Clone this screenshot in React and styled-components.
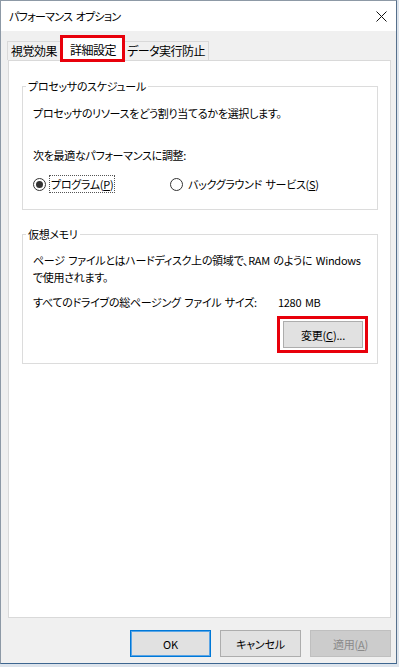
import React from 'react';
import styled, { createGlobalStyle } from 'styled-components';

// Base page: no margin, Japanese UI font with proportional kana
const GlobalStyle = createGlobalStyle`
  html, body {
    margin: 0;
    padding: 0;
    background: #dde4ec;
  }
  body {
    font-family: "Noto Sans CJK JP", "Noto Sans", sans-serif;
    font-size: 11px;
    color: #000000;
  }
`;

const Window = styled.div`
  width: 397px;
  height: 664px;
  box-sizing: border-box;
  border: 1px solid #8d99a6;
  border-right-color: #56708c;
  border-bottom-color: #3d6690;
  background: #f0f0f0;
  display: flex;
  flex-direction: column;
  font-size: 11px;
  font-feature-settings: "palt";
  letter-spacing: -0.3px;
  word-spacing: 1.5px;
  line-height: 16px;
`;

const TitleBar = styled.div`
  height: 30px;
  flex: none;
  background: #ffffff;
  display: flex;
  align-items: center;
  justify-content: space-between;
  padding: 0 9px 0 8px;
`;

const Title = styled.span`
  font-size: 11px;
  letter-spacing: -0.7px;
`;

const Body = styled.div`
  flex: 1;
  display: flex;
  flex-direction: column;
  padding: 4px 5px 0 6px;
  min-height: 0;
`;

const TabStrip = styled.div`
  display: flex;
  align-items: flex-end;
  height: 25px;
  flex: none;
`;

const Tab = styled.div`
  position: relative;
  box-sizing: border-box;
  display: flex;
  align-items: center;
  white-space: nowrap;
  font-size: 12px;
  letter-spacing: -0.5px;
  height: ${(p) => (p.$active ? '27px' : '19px')};
  padding: ${(p) => (p.$active ? '2px 6px 0 7px' : '0 3px')};
  margin: ${(p) => (p.$active ? '0 -2px -2px -1px' : '0')};
  background: ${(p) => (p.$active ? '#ffffff' : '#f0f0f0')};
  border: ${(p) => (p.$active ? '3px solid #e8000b' : '1px solid #d9d9d9')};
  border-bottom-width: ${(p) => (p.$active ? '3px' : '0')};
  z-index: ${(p) => (p.$active ? 2 : 1)};
`;

const Panel = styled.div`
  flex: 1;
  margin-left: 1px;
  background: #ffffff;
  border: 1px solid #d9d9d9;
  padding: 17px 12px 0 13px;
  display: flex;
  flex-direction: column;
  gap: 16px;
`;

const Group = styled.fieldset`
  margin: 0;
  padding: 0 9px ${(p) => p.$bottom}px 10px;
  border: 1px solid #dcdcdc;
  min-width: 0;
`;

const Legend = styled.legend`
  margin-left: -7px;
  padding: 0 2px;
  line-height: 16px;
`;

const Line = styled.div`
  white-space: nowrap;
  margin-top: ${(p) => p.$top || 0}px;
  line-height: ${(p) => p.$lh || 16}px;
`;

const RadioRow = styled.div`
  display: grid;
  grid-template-columns: 137px auto;
  margin-top: 12px;
  height: 18px;
`;

const Option = styled.label`
  display: flex;
  align-items: center;
  gap: 3px;
`;

const RadioDot = styled.span`
  width: 13px;
  height: 13px;
  box-sizing: border-box;
  border: 1px solid #333333;
  border-radius: 50%;
  display: flex;
  align-items: center;
  justify-content: center;
  background: #ffffff;

  &::after {
    content: '';
    width: 7px;
    height: 7px;
    border-radius: 50%;
    background: ${(p) => (p.$checked ? '#333333' : 'transparent')};
  }
`;

const OptionText = styled.span`
  white-space: nowrap;
  padding: 0 1px;
  line-height: 16px;
  border: 1px ${(p) => (p.$focused ? 'dotted #555555' : 'solid transparent')};
`;

const Key = styled.span`
  text-decoration: underline;
`;

const SizeRow = styled.div`
  display: grid;
  grid-template-columns: 245px auto;
  margin-top: 8px;
  white-space: nowrap;
`;

const ButtonRow = styled.div`
  display: flex;
  justify-content: flex-end;
  margin-top: 6px;
`;

const Highlight = styled.div`
  border: 3px solid #e8000b;
  padding: 2px 2px 2px 3px;
`;

const Button = styled.button`
  width: 81px;
  height: 27px;
  box-sizing: border-box;
  font-family: inherit;
  font-size: 11px;
  font-feature-settings: "palt";
  letter-spacing: -0.2px;
  padding: 0;
  color: ${(p) => (p.$disabled ? '#8a8a8a' : '#000000')};
  background: ${(p) => (p.$disabled ? '#cccccc' : '#e1e1e1')};
  border: 1px solid
    ${(p) => (p.$default ? '#0078d7' : p.$disabled ? '#bfbfbf' : '#adadad')};
  box-shadow: ${(p) => (p.$default ? 'inset 0 0 0 1px #5aa5e6' : 'none')};
`;

const SmallButton = styled(Button)`
  width: 80px;
`;

const Footer = styled.div`
  flex: none;
  display: flex;
  justify-content: flex-end;
  gap: 9px;
  padding: 12px 0 6px;
`;

const CloseIcon = () => (
  <svg width="11" height="11" viewBox="0 0 11 11">
    <path d="M0.5 0.5 L10.5 10.5 M10.5 0.5 L0.5 10.5" stroke="#111111" strokeWidth="1" fill="none" />
  </svg>
);

export default function App() {
  return (
    <>
      <GlobalStyle />
      <Window>
        <TitleBar>
          <Title>パフォーマンス オプション</Title>
          <CloseIcon />
        </TitleBar>
        <Body>
          <TabStrip>
            <Tab>視覚効果</Tab>
            <Tab $active>詳細設定</Tab>
            <Tab>データ実行防止</Tab>
          </TabStrip>
          <Panel>
            <Group $bottom={16}>
              <Legend>プロセッサのスケジュール</Legend>
              <Line $top={11}>プロセッサのリソースをどう割り当てるかを選択します。</Line>
              <Line $top={26}>次を最適なパフォーマンスに調整:</Line>
              <RadioRow>
                <Option>
                  <RadioDot $checked />
                  <OptionText $focused>
                    プログラム(<Key>P</Key>)
                  </OptionText>
                </Option>
                <Option>
                  <RadioDot />
                  <OptionText>
                    バックグラウンド サービス(<Key>S</Key>)
                  </OptionText>
                </Option>
              </RadioRow>
            </Group>
            <Group $bottom={10}>
              <Legend>仮想メモリ</Legend>
              <Line $top={10} $lh={17}>
                ページ ファイルとはハードディスク上の領域で、RAM のように Windows
              </Line>
              <Line $lh={17}>で使用されます。</Line>
              <SizeRow>
                <span>すべてのドライブの総ページング ファイル サイズ:</span>
                <span>1280 MB</span>
              </SizeRow>
              <ButtonRow>
                <Highlight>
                  <SmallButton>
                    変更(<Key>C</Key>)...
                  </SmallButton>
                </Highlight>
              </ButtonRow>
            </Group>
          </Panel>
          <Footer>
            <Button $default>OK</Button>
            <Button>キャンセル</Button>
            <Button $disabled>
              適用(<Key>A</Key>)
            </Button>
          </Footer>
        </Body>
      </Window>
    </>
  );
}
